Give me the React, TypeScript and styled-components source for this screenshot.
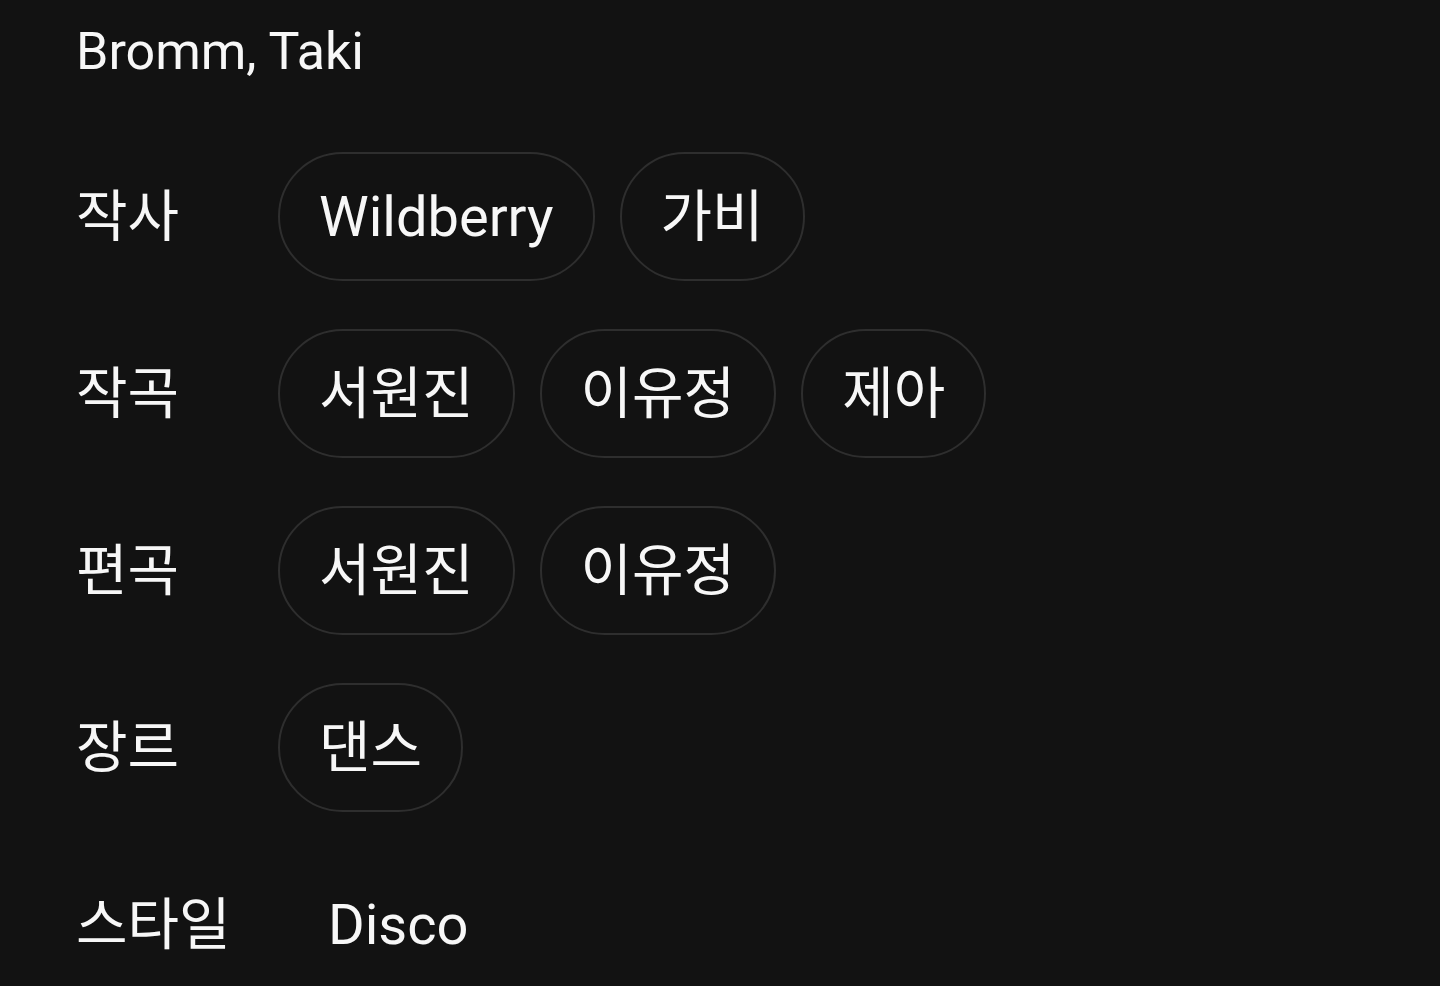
import React from "react";
import styled, { createGlobalStyle } from "styled-components";

const GlobalStyle = createGlobalStyle`
  html, body {
    margin: 0;
    padding: 0;
    background: #121212;
  }
  body {
    font-family: Roboto, "Noto Sans CJK KR", sans-serif;
    color: #f7f7f7;
  }
`;

const Page = styled.div`
  width: 1440px;
  height: 986px;
  overflow: hidden;
  box-sizing: border-box;
  padding: 21px 0 0 76px;
  display: flex;
  flex-direction: column;
`;

const Artists = styled.div`
  font-size: 52px;
  line-height: 62px;
  margin-bottom: 69px;
`;

const Rows = styled.div`
  display: flex;
  flex-direction: column;
  gap: 48px;
`;

const Row = styled.div`
  display: grid;
  grid-template-columns: 202px 1fr;
  align-items: center;
  min-height: 129px;
`;

const Label = styled.div`
  font-size: 56px;
  line-height: 66px;
  white-space: nowrap;
`;

const Chips = styled.div`
  display: flex;
  gap: 25px;
`;

const Chip = styled.div`
  height: 129px;
  box-sizing: border-box;
  padding: 0 39px;
  border: 2px solid #2e2e2e;
  border-radius: 65px;
  display: flex;
  align-items: center;
  font-size: 56px;
  line-height: 66px;
  white-space: nowrap;
`;

const PlainValue = styled.div<{ $offset: number }>`
  font-size: 56px;
  line-height: 66px;
  padding-left: ${(p) => p.$offset}px;
`;

const credits: { label: string; values: string[] }[] = [
  { label: "작사", values: ["Wildberry", "가비"] },
  { label: "작곡", values: ["서원진", "이유정", "제아"] },
  { label: "편곡", values: ["서원진", "이유정"] },
  { label: "장르", values: ["댄스"] },
];

export default function App() {
  return (
    <>
      <GlobalStyle />
      <Page>
        <Artists>Bromm, Taki</Artists>
        <Rows>
          {credits.map((c) => (
            <Row key={c.label}>
              <Label>{c.label}</Label>
              <Chips>
                {c.values.map((v) => (
                  <Chip key={v}>{v}</Chip>
                ))}
              </Chips>
            </Row>
          ))}
          <Row>
            <Label>스타일</Label>
            <PlainValue $offset={50}>Disco</PlainValue>
          </Row>
        </Rows>
      </Page>
    </>
  );
}
